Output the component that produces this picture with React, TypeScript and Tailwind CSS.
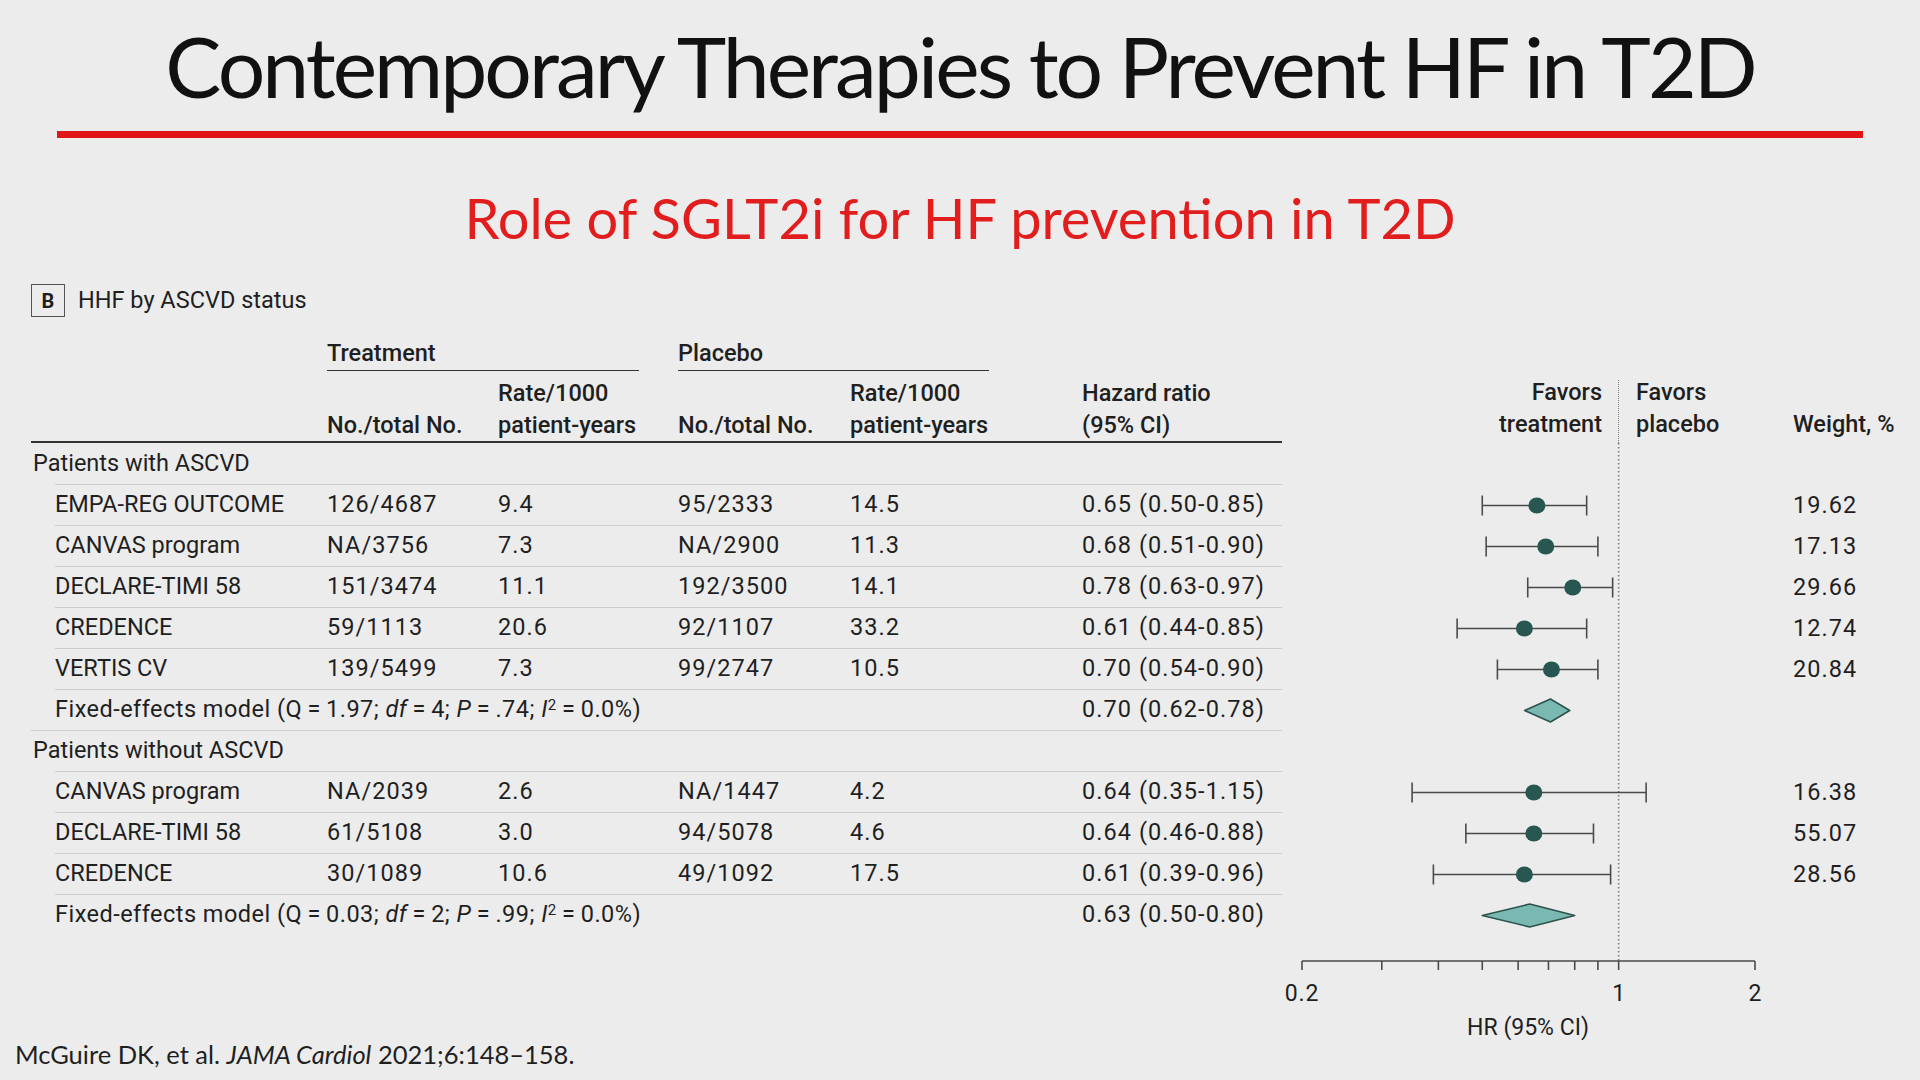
import React from "react";

type Row =
  | { kind: "group"; label: string; first?: boolean }
  | {
      kind: "study";
      label: string;
      t1: string;
      t2: string;
      p1: string;
      p2: string;
      hr: string;
      est: number;
      lo: number;
      hi: number;
      weight: string;
    }
  | { kind: "model"; q: string; df: string; p: string; hr: string; est: number; lo: number; hi: number };

const rows: Row[] = [
  { kind: "group", label: "Patients with ASCVD", first: true },
  { kind: "study", label: "EMPA-REG OUTCOME", t1: "126/4687", t2: "9.4", p1: "95/2333", p2: "14.5", hr: "0.65 (0.50-0.85)", est: 0.65, lo: 0.5, hi: 0.85, weight: "19.62" },
  { kind: "study", label: "CANVAS program", t1: "NA/3756", t2: "7.3", p1: "NA/2900", p2: "11.3", hr: "0.68 (0.51-0.90)", est: 0.68, lo: 0.51, hi: 0.9, weight: "17.13" },
  { kind: "study", label: "DECLARE-TIMI 58", t1: "151/3474", t2: "11.1", p1: "192/3500", p2: "14.1", hr: "0.78 (0.63-0.97)", est: 0.78, lo: 0.63, hi: 0.97, weight: "29.66" },
  { kind: "study", label: "CREDENCE", t1: "59/1113", t2: "20.6", p1: "92/1107", p2: "33.2", hr: "0.61 (0.44-0.85)", est: 0.61, lo: 0.44, hi: 0.85, weight: "12.74" },
  { kind: "study", label: "VERTIS CV", t1: "139/5499", t2: "7.3", p1: "99/2747", p2: "10.5", hr: "0.70 (0.54-0.90)", est: 0.7, lo: 0.54, hi: 0.9, weight: "20.84" },
  { kind: "model", q: "1.97", df: "4", p: ".74", hr: "0.70 (0.62-0.78)", est: 0.7, lo: 0.62, hi: 0.78 },
  { kind: "group", label: "Patients without ASCVD" },
  { kind: "study", label: "CANVAS program", t1: "NA/2039", t2: "2.6", p1: "NA/1447", p2: "4.2", hr: "0.64 (0.35-1.15)", est: 0.64, lo: 0.35, hi: 1.15, weight: "16.38" },
  { kind: "study", label: "DECLARE-TIMI 58", t1: "61/5108", t2: "3.0", p1: "94/5078", p2: "4.6", hr: "0.64 (0.46-0.88)", est: 0.64, lo: 0.46, hi: 0.88, weight: "55.07" },
  { kind: "study", label: "CREDENCE", t1: "30/1089", t2: "10.6", p1: "49/1092", p2: "17.5", hr: "0.61 (0.39-0.96)", est: 0.61, lo: 0.39, hi: 0.96, weight: "28.56" },
  { kind: "model", q: "0.03", df: "2", p: ".99", hr: "0.63 (0.50-0.80)", est: 0.63, lo: 0.5, hi: 0.8 },
];

const ROW_H = 41;
const AXIS_Y = 518;
// log scale: 0.2 at x=20, 2 at x=473
const px = (v: number) => 20 + 453 * Math.log10(v / 0.2);
const ticks = [0.2, 0.3, 0.4, 0.5, 0.6, 0.7, 0.8, 0.9, 1, 2];

const cols = "grid grid-cols-[272px_171px_180px_172px_232px_200px] items-center";
const sans = "font-['Roboto','Liberation_Sans',sans-serif]";
const num = "tracking-[0.045em]";

function TableRow({ row }: { row: Row }) {
  if (row.kind === "group") {
    return (
      <div className={`flex h-[41px] items-center pl-[2px] ${row.first ? "" : "border-t border-[#cdcdcd]"}`}>
        {row.label}
      </div>
    );
  }
  if (row.kind === "model") {
    return (
      <div className={`ml-[24px] h-[41px] border-t border-[#cdcdcd] ${cols}`}>
        <span className="col-span-5 whitespace-nowrap tracking-[0.02em]">
          Fixed-effects model (Q{"\u2009"}={"\u2009"}
          {row.q}; <i>df</i>
          {"\u2009"}={"\u2009"}
          {row.df}; <i>P</i>
          {"\u2009"}={"\u2009"}
          {row.p}; <i>I</i>
          <sup className="text-[15px]">2</sup>
          {"\u2009"}={"\u2009"}0.0%)
        </span>
        <span className={num}>{row.hr}</span>
      </div>
    );
  }
  return (
    <div className={`ml-[24px] h-[41px] border-t border-[#cdcdcd] ${cols}`}>
      <span>{row.label}</span>
      <span className={num}>{row.t1}</span>
      <span className={num}>{row.t2}</span>
      <span className={num}>{row.p1}</span>
      <span className={num}>{row.p2}</span>
      <span className={num}>{row.hr}</span>
    </div>
  );
}

function ForestPlot() {
  const x1 = px(1);
  return (
    <svg width={511} height={597} className="block">
      <line x1={x1} y1={0} x2={x1} y2={AXIS_Y} stroke="#7a7a7a" strokeWidth={1.6} strokeDasharray="1.6 2.4" />
      {rows.map((row, i) => {
        const cy = i * ROW_H + 21.5;
        if (row.kind === "study") {
          return (
            <g key={i}>
              <line x1={px(row.lo)} y1={cy} x2={px(row.hi)} y2={cy} stroke="#4a4a4a" strokeWidth={1.6} />
              <line x1={px(row.lo)} y1={cy - 10} x2={px(row.lo)} y2={cy + 10} stroke="#4a4a4a" strokeWidth={1.6} />
              <line x1={px(row.hi)} y1={cy - 10} x2={px(row.hi)} y2={cy + 10} stroke="#4a4a4a" strokeWidth={1.6} />
              <ellipse cx={px(row.est) + 3} cy={cy} rx={8.5} ry={8} fill="#285650" />
            </g>
          );
        }
        if (row.kind === "model") {
          const mid = px(row.est) + 2;
          const pts = `${px(row.lo)},${cy} ${mid},${cy - 11.5} ${px(row.hi)},${cy} ${mid},${cy + 11.5}`;
          return <polygon key={i} points={pts} fill="#7ab9b1" stroke="#2c524d" strokeWidth={1.5} strokeLinejoin="round" />;
        }
        return null;
      })}
      <line x1={px(0.2)} y1={AXIS_Y} x2={px(2)} y2={AXIS_Y} stroke="#4a4a4a" strokeWidth={1.6} />
      {ticks.map((t) => (
        <line key={t} x1={px(t)} y1={AXIS_Y} x2={px(t)} y2={AXIS_Y + 9} stroke="#4a4a4a" strokeWidth={1.6} />
      ))}
      <g className={sans} fontSize={23} fill="#1f1f1f" textAnchor="middle">
        <text x={px(0.2)} y={AXIS_Y + 40} letterSpacing="0.04em">0.2</text>
        <text x={px(1)} y={AXIS_Y + 40}>1</text>
        <text x={px(2)} y={AXIS_Y + 40}>2</text>
        <text x={246} y={AXIS_Y + 74}>HR (95% CI)</text>
      </g>
    </svg>
  );
}

export default function App() {
  return (
    <div className="flex h-[1080px] w-[1920px] flex-col overflow-hidden bg-[#ececec] text-[#1f1f1f]">
      <div className="flex h-[131px] items-start justify-center pt-[24px]">
        <h1 className="font-['Lato','Open_Sans',sans-serif] text-[84px] leading-none tracking-[-0.035em] text-[#111]">
          Contemporary Therapies to Prevent HF in T2D
        </h1>
      </div>
      <div className="mx-[57px] h-[7px] bg-[#e01515]" />
      <div className="flex h-[146px] justify-center pt-[52px]">
        <h2 className="font-['Lato','Open_Sans',sans-serif] text-[56px] leading-none text-[#e11d1d]">
          Role of SGLT2i for HF prevention in T2D
        </h2>
      </div>

      <div className={`pl-[31px] text-[23.5px] ${sans}`}>
        <div className="flex h-[33px] items-center gap-[13px]">
          <span className="flex h-[33px] w-[34px] items-center justify-center border border-[#555] text-[20px] font-bold">
            B
          </span>
          <span>HHF by ASCVD status</span>
        </div>

        <div className="mt-[20px] flex items-start">
          <div className="w-[1251px]">
            <div className="h-[106px] border-b-2 border-[#333] font-medium">
              <div className="ml-[296px] flex h-[34px] items-center gap-[39px]">
                <div className="flex h-full w-[312px] items-center border-b border-[#333]">Treatment</div>
                <div className="flex h-full w-[311px] items-center border-b border-[#333]">Placebo</div>
              </div>
              <div className="grid h-[70px] grid-cols-[296px_171px_180px_172px_232px_200px] items-end leading-[32px]">
                <span />
                <span>No./total No.</span>
                <span>
                  Rate/1000
                  <br />
                  patient-years
                </span>
                <span>No./total No.</span>
                <span>
                  Rate/1000
                  <br />
                  patient-years
                </span>
                <span>
                  Hazard ratio
                  <br />
                  (95% CI)
                </span>
              </div>
            </div>
            {rows.map((row, i) => (
              <TableRow key={i} row={row} />
            ))}
          </div>

          <div className="w-[511px]">
            <div className="flex h-[106px] items-end font-medium leading-[32px]">
              <div className="w-[320px] pb-[3px] text-right">
                Favors
                <br />
                treatment
              </div>
              <div className="ml-[16px] h-[63px] border-l-[1.6px] border-dotted border-[#7a7a7a]" />
              <div className="ml-[17px] pb-[3px]">
                Favors
                <br />
                placebo
              </div>
            </div>
            <ForestPlot />
          </div>

          <div className="flex-1">
            <div className="flex h-[106px] items-end pb-[3px] font-medium leading-[32px]">Weight, %</div>
            {rows.map((row, i) => (
              <div key={i} className={`flex h-[41px] items-center pt-[2px] ${num}`}>
                {row.kind === "study" ? row.weight : ""}
              </div>
            ))}
          </div>
        </div>
      </div>

      <div className="mt-[2px] pl-[15px] font-['Lato','Open_Sans',sans-serif] text-[25.5px] leading-none">
        McGuire DK, et al. <i>JAMA Cardiol</i> 2021;6:148–158.
      </div>
    </div>
  );
}
